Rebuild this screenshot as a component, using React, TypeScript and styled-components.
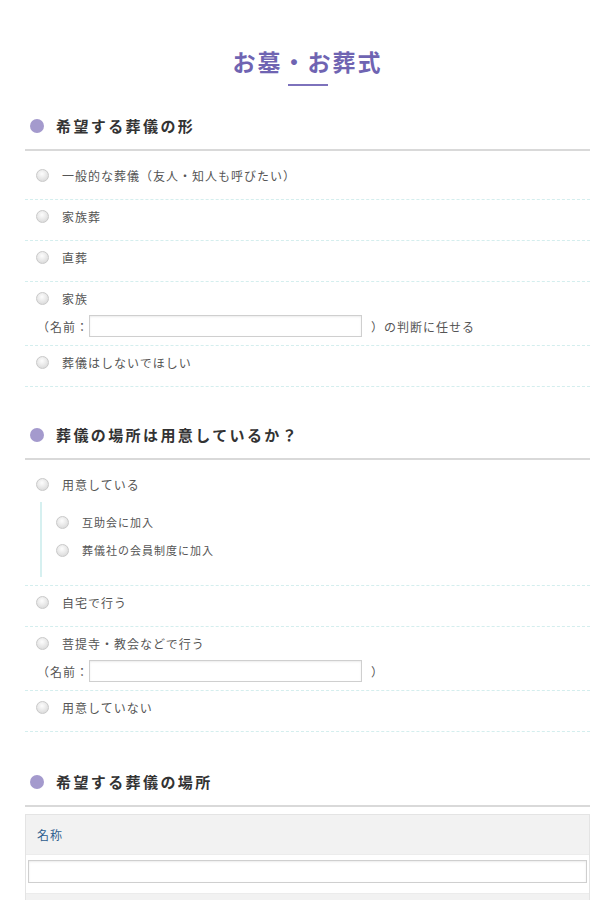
import React from "react";
import styled, { createGlobalStyle } from "styled-components";

interface Choice {
  label: string;
  nameField?: { after: string };
  children?: string[];
}

interface Question {
  title: string;
  choices: Choice[];
}

const questions: Question[] = [
  {
    title: "希望する葬儀の形",
    choices: [
      { label: "一般的な葬儀（友人・知人も呼びたい）" },
      { label: "家族葬" },
      { label: "直葬" },
      { label: "家族", nameField: { after: "）の判断に任せる" } },
      { label: "葬儀はしないでほしい" },
    ],
  },
  {
    title: "葬儀の場所は用意しているか？",
    choices: [
      { label: "用意している", children: ["互助会に加入", "葬儀社の会員制度に加入"] },
      { label: "自宅で行う" },
      { label: "菩提寺・教会などで行う", nameField: { after: "）" } },
      { label: "用意していない" },
    ],
  },
];

const GlobalStyle = createGlobalStyle`
  body {
    margin: 0;
    background: #fff;
    font-family: "Noto Sans CJK JP", "Noto Sans", sans-serif;
  }
`;

const Page = styled.div`
  padding: 45px 25px 0;
  width: 565px;
`;

const Title = styled.h1`
  margin: 0;
  text-align: center;
  font-size: 23px;
  line-height: 32px;
  letter-spacing: 2px;
  font-weight: bold;
  color: #6f64b2;
`;

const TitleBar = styled.div`
  width: 40px;
  height: 2px;
  margin: 7px auto 0;
  background: #7d72bc;
`;

const Section = styled.section`
  margin-top: 28px;
  & + & {
    margin-top: 36px;
  }
  &:last-child {
    margin-top: 38px;
  }
`;

const SectionHead = styled.h2`
  display: flex;
  align-items: center;
  gap: 12px;
  margin: 0;
  padding: 0 0 11px 5px;
  font-size: 15px;
  line-height: 24px;
  letter-spacing: 2.4px;
  font-weight: bold;
  color: #333;
  border-bottom: 2px solid #d9d9d9;
`;

const Dot = styled.span`
  width: 14px;
  height: 14px;
  border-radius: 50%;
  background: #a49acd;
  flex-shrink: 0;
`;

const OptionList = styled.ul`
  list-style: none;
  margin: 0;
  padding: 8px 0 0;
`;

const OptionRow = styled.li`
  padding: 7px 0 15px 11px;
  border-bottom: 1px dashed #d4eeee;
`;

const OptionLine = styled.label<{ $small?: boolean }>`
  display: flex;
  align-items: center;
  gap: 13px;
  height: ${(p) => (p.$small ? "28px" : "18px")};
  font-size: ${(p) => (p.$small ? "11px" : "12px")};
  letter-spacing: 1px;
  color: #555;
`;

const Radio = styled.span`
  width: 13px;
  height: 13px;
  box-sizing: border-box;
  border-radius: 50%;
  border: 1px solid #c9c9c9;
  background: radial-gradient(circle at 45% 35%, #fdfdfd 0%, #e6e6e6 55%, #d2d2d2 100%);
  flex-shrink: 0;
`;

const NameLine = styled.div`
  display: flex;
  align-items: center;
  margin: 8px 0 -7px 1px;
  font-size: 12px;
  letter-spacing: 1px;
  color: #555;
`;

const NameInput = styled.input`
  width: 273px;
  height: 22px;
  box-sizing: border-box;
  margin: 0 9px 0 0;
  border: 1px solid #cfcfcf;
  box-shadow: inset 0 1px 2px rgba(0, 0, 0, 0.08);
  background: #fff;
`;

const SubList = styled.div`
  margin: 9px 0 -7px 4px;
  padding: 6px 0 13px 14px;
  border-left: 2px solid #d6f0f0;
`;

const Table = styled.div`
  margin-top: 7px;
  border: 1px solid #e4e4e4;
`;

const HeadCell = styled.div`
  height: 39px;
  display: flex;
  align-items: center;
  padding-left: 11px;
  background: #f2f2f2;
  font-size: 12px;
  letter-spacing: 1px;
  color: #2f5f8f;
`;

const InputCell = styled.div`
  padding: 5px 2px 10px;
  background: #fff;
  border-top: 1px solid #ececec;
  border-bottom: 1px solid #ececec;
`;

const WideInput = styled.input`
  display: block;
  width: 100%;
  height: 23px;
  box-sizing: border-box;
  border: 1px solid #cfcfcf;
  box-shadow: inset 0 1px 2px rgba(0, 0, 0, 0.08);
`;

const App = () => {
  return (
    <Page>
      <GlobalStyle />
      <Title>お墓・お葬式</Title>
      <TitleBar />

      {questions.map((q) => (
        <Section key={q.title}>
          <SectionHead>
            <Dot />
            {q.title}
          </SectionHead>
          <OptionList>
            {q.choices.map((c) => (
              <OptionRow key={c.label}>
                <OptionLine>
                  <Radio />
                  {c.label}
                </OptionLine>
                {c.children && (
                  <SubList>
                    {c.children.map((s) => (
                      <OptionLine $small key={s}>
                        <Radio />
                        {s}
                      </OptionLine>
                    ))}
                  </SubList>
                )}
                {c.nameField && (
                  <NameLine>
                    （名前：
                    <NameInput type="text" />
                    {c.nameField.after}
                  </NameLine>
                )}
              </OptionRow>
            ))}
          </OptionList>
        </Section>
      ))}

      <Section>
        <SectionHead>
          <Dot />
          希望する葬儀の場所
        </SectionHead>
        <Table>
          <HeadCell>名称</HeadCell>
          <InputCell>
            <WideInput type="text" />
          </InputCell>
          <HeadCell />
        </Table>
      </Section>
    </Page>
  );
};

export default App;
